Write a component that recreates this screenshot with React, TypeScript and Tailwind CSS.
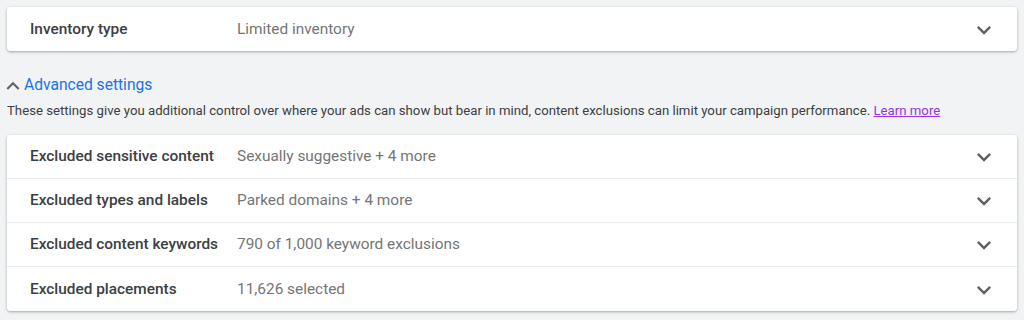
import React from 'react';

const rows = [
  { label: 'Excluded sensitive content', value: 'Sexually suggestive + 4 more' },
  { label: 'Excluded types and labels', value: 'Parked domains + 4 more' },
  { label: 'Excluded content keywords', value: '790 of 1,000 keyword exclusions' },
  { label: 'Excluded placements', value: '11,626 selected' },
];

function ExpandMore() {
  return (
    <svg width="28" height="28" viewBox="0 0 24 24" fill="#5f6368">
      <path d="M16.59 8.59L12 13.17 7.41 8.59 6 10l6 6 6-6z" />
    </svg>
  );
}

function ExpandLess() {
  return (
    <svg width="26" height="26" viewBox="0 0 24 24" fill="#5f6368">
      <path d="M12 8l-6 6 1.41 1.41L12 10.83l4.59 4.58L18 14z" />
    </svg>
  );
}

function SettingRow({ label, value }: { label: string; value: string }) {
  return (
    <div className="flex h-[44px] items-center bg-white pl-[23px] pr-[19px] pt-[1px]">
      <div className="w-[207px] shrink-0 text-[15.4px] font-medium text-[#3c4043]">{label}</div>
      <div className="flex-1 text-[15.4px] text-[#757575]">{value}</div>
      <ExpandMore />
    </div>
  );
}

export default function App() {
  return (
    <div className="h-[320px] w-full bg-[#f1f3f4] pt-[7px] font-['Roboto',sans-serif]">
      <div className="mx-[7px] overflow-hidden rounded-[4px] bg-white shadow-[0_1px_2px_rgba(60,64,67,0.3),0_1px_3px_1px_rgba(60,64,67,0.1)]">
        <SettingRow label="Inventory type" value="Limited inventory" />
      </div>

      <div className="mt-[22px] flex h-[26px] items-center">
        <ExpandLess />
        <span className="-ml-[2px] text-[15.6px] text-[#1a73e8]">Advanced settings</span>
      </div>

      <p className="mt-[1px] pl-[7px] text-[13.2px] leading-[22px] text-[#3c4043]">
        These settings give you additional control over where your ads can show but bear in mind, content exclusions can limit your campaign performance.{' '}
        <a href="#" className="text-[#9334e6] underline">Learn more</a>
      </p>

      <div className="mx-[7px] mt-[13px] divide-y divide-[#e8eaed] overflow-hidden rounded-[4px] bg-white shadow-[0_1px_2px_rgba(60,64,67,0.3),0_1px_3px_1px_rgba(60,64,67,0.1)]">
        {rows.map((r) => (
          <SettingRow key={r.label} label={r.label} value={r.value} />
        ))}
      </div>
    </div>
  );
}
